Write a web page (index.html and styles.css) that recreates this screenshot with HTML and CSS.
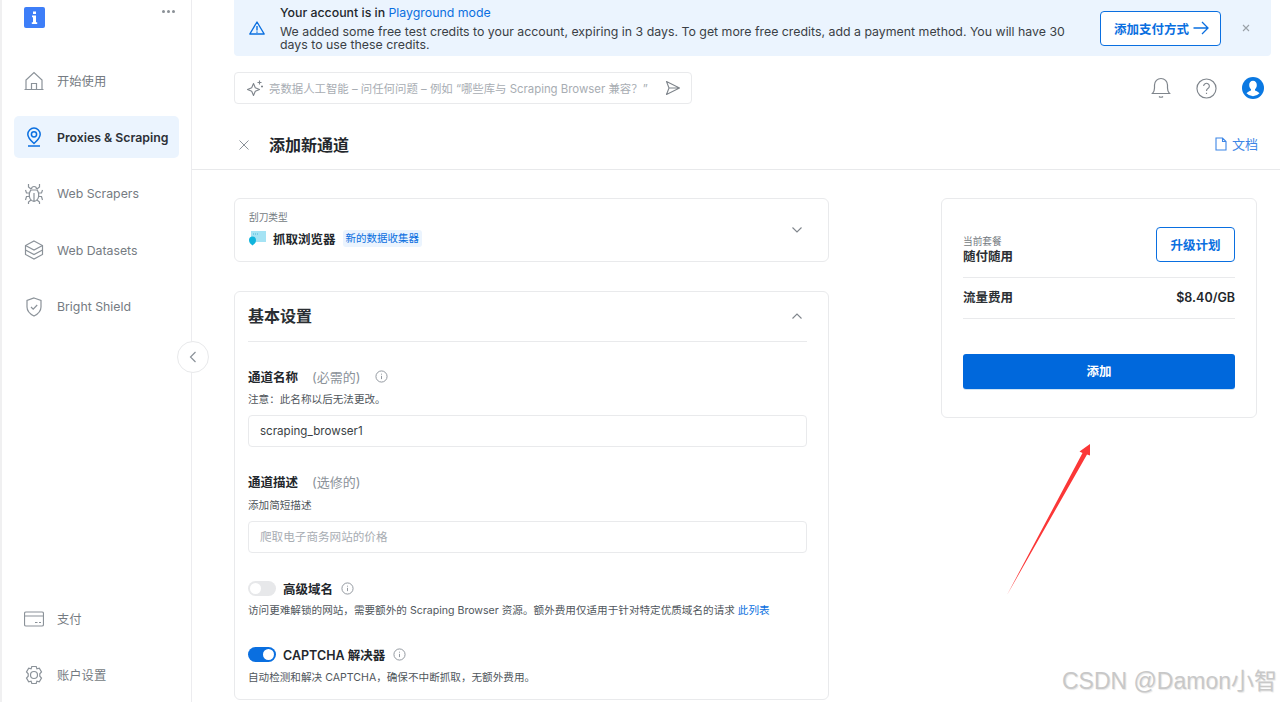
FILE: index.html
```html
<!DOCTYPE html>
<html lang="zh">
<head>
<meta charset="utf-8">
<title>添加新通道</title>
<link rel="stylesheet" href="styles.css">
</head>
<body>
<div class="app">
  <aside class="sidebar">
    <div class="side-top">
      <div class="logo"><svg viewBox="0 0 21 21" width="21" height="21"><rect width="21" height="21" rx="2" fill="#3d7ef8"/><path d="M9 4.500h3v2.600H9zM8 8.500h4v6.700h1.200V17H7.800v-1.800H9v-4.900H8z" fill="#fff"/></svg></div>
      <span class="dots"><i></i><i></i><i></i></span>
    </div>
    <nav class="nav">
      <a class="nav-item"><svg class="ico" viewBox="0 0 20 20"><path d="M.5 18.500h19M2 18.500V9L10 1.500 18 9v9.500M7.500 18.500v-6h5v6" /></svg>开始使用</a>
      <a class="nav-item active"><svg class="ico" viewBox="0 0 20 20"><path d="M10 16.500C6.500 13.500 3.800 10.500 3.800 7.300a6.200 6.200 0 0 1 12.400 0c0 3.200-2.700 6.200-6.200 9.200z"/><circle cx="10" cy="7.300" r="2.600"/><path d="M4 19h12"/></svg>Proxies &amp; Scraping</a>
      <a class="nav-item"><svg class="ico" viewBox="0 0 20 20"><path d="M7.500 5a2.500 2.500 0 0 1 5 0M7 6h6c1.500 1.500 2 4 1.500 7-.5 2.500-2.500 4-4.500 4.500-2-.5-4-2-4.500-4.500-.5-3 0-5.500 1.500-7zM7 5 4.500 3V0M13 5l2.500-2V0M5.500 9h-3l-1-3M14.500 9h3l1-3M5.500 12.500h-3l-1 3.500M14.500 12.500h3l1 3.500M7 16l-2.500 2v2M13 16l2.500 2v2M10 9v8"/></svg>Web Scrapers</a>
      <a class="nav-item"><svg class="ico" viewBox="0 0 20 20"><path d="M10 1 18.500 5.500v9L10 19l-8.500-4.500v-9zM1.500 5.500 10 10l8.500-4.500M1.500 10 10 14.500 18.500 10"/></svg>Web Datasets</a>
      <a class="nav-item"><svg class="ico" viewBox="0 0 20 20"><path d="M10 1 17 3.500v6.500c0 4-3 7-7 9-4-2-7-5-7-9V3.500zM7 10l2.200 2.200L13.200 8"/></svg>Bright Shield</a>
    </nav>
    <nav class="nav nav-bottom">
      <a class="nav-item"><svg class="ico" viewBox="0 0 20 20"><rect x=".5" y="3" width="19" height="14" rx="1.500"/><path d="M.5 7h19M11 13.500h2.500M15 13.500h2"/></svg>支付</a>
      <a class="nav-item"><svg class="ico" viewBox="0 0 20 20"><circle cx="10" cy="10" r="3.500"/><path d="M7.800 1.500h4.400l.7 2.300 2.400-.6 2.200 3.800-1.700 1.800v2.400l1.700 1.800-2.200 3.800-2.400-.6-.7 2.300H7.800l-.7-2.300-2.400.6-2.200-3.800 1.700-1.800V8.800L2.500 7l2.200-3.800 2.400.6z"/></svg>账户设置</a>
    </nav>
  </aside>
  <button class="collapse" aria-label="收起"><svg viewBox="0 0 10 14" width="10" height="14"><path d="M7.500 2 2.500 7l5 5"/></svg></button>

  <main class="main">
    <div class="banner">
      <svg class="warn" viewBox="0 0 16 14" width="16" height="14"><path d="M8 1 15.200 13H.8zM8 5v4.500M8 10.500v1.300"/></svg>
      <div class="banner-text">
        <div class="banner-title">Your account is in <a class="link">Playground mode</a></div>
        <p>We added some free test credits to your account, expiring in 3 days. To get more free credits, add a payment method. You will have 30 days to use these credits.</p>
      </div>
      <button class="btn-outline btn-pay">添加支付方式<svg viewBox="0 0 16 14" width="16" height="14"><path d="M.5 7h14.500M9 1l6 6-6 6"/></svg></button>
      <svg class="banner-x" viewBox="0 0 8 8" width="8" height="8"><path d="M1 1l6 6M7 1 1 7"/></svg>
    </div>

    <div class="toolbar">
      <div class="ask">
        <svg class="spark" viewBox="0 0 18 18" width="18" height="18"><path d="M7.500 4.500 9.300 8.700 13.500 10.500 9.300 12.300 7.500 16.500 5.700 12.300 1.500 10.500 5.700 8.700zM13.500 1.500v4M11.500 3.500h4M16 6.500v2M15 7.500h2"/></svg>
        <span class="ask-text">亮数据人工智能 – 问任何问题 – 例如 “哪些库与 Scraping Browser 兼容？”</span>
        <svg class="send" viewBox="0 0 16 16" width="16" height="16"><path d="M1.500 1.500 14.500 8 1.500 14.500 4 8zM4 8h10.500"/></svg>
      </div>
      <div class="tools">
        <svg class="tool" viewBox="0 0 20 22" width="20" height="22"><path d="M1.500 16.500c1.500-1.500 2-3 2-5.500V8a6.500 6.500 0 0 1 13 0v3c0 2.500.5 4 2 5.500zM8 19.500c1 1 3 1 4 0"/></svg>
        <svg class="tool" viewBox="0 0 22 22" width="21" height="21"><circle cx="11" cy="11" r="10"/><path d="M8 8.500a3 3 0 1 1 4.500 2.600c-1 .6-1.500 1.200-1.500 2.400M11 15.500v1.300"/></svg>
        <svg class="avatar" viewBox="0 0 22 22" width="22" height="22"><circle cx="11" cy="11" r="11" fill="#0a78e2"/><path d="M11 3.800c2.300 0 3.800 1.800 3.800 4.200 0 2-.8 3.400-1.800 4.300v1.200c1.800.6 3.600 1.500 4.500 2.800A8.800 8.800 0 0 1 11 19.200a8.800 8.800 0 0 1-6.500-2.900c.9-1.300 2.700-2.200 4.500-2.800v-1.200C8 11.400 7.200 10 7.200 8c0-2.400 1.500-4.200 3.800-4.200z" fill="#fff"/></svg>
      </div>
    </div>

    <header class="page-head">
      <div class="head-left">
        <svg class="close" viewBox="0 0 10 10" width="10" height="10"><path d="M.5.500l9 9M9.500.500l-9 9"/></svg>
        <h1>添加新通道</h1>
      </div>
      <a class="docs"><svg viewBox="0 0 12 14" width="12" height="14"><path d="M1 1h6.500L11 4.500V13H1zM7.500 1v3.500H11"/></svg>文档</a>
    </header>

    <div class="content">
      <div class="col-form">
        <section class="card type-card">
          <div>
            <div class="type-label">刮刀类型</div>
            <div class="type-row">
              <svg viewBox="0 0 17 16" width="17" height="16"><rect x="2" y="1" width="15" height="11" fill="#a5e3f4"/><path d="M4 4h1M6 4h1M8 4h1" stroke="#4fb8d8" stroke-width="1"/><path d="M3.500 15.500C1.500 14 0 12.500 0 10a3.500 3.500 0 0 1 7 0c0 2.500-1.500 4-3.500 5.500z" fill="#10b4dc"/></svg>
              <strong>抓取浏览器</strong>
              <span class="tag">新的数据收集器</span>
            </div>
          </div>
          <svg class="chev" viewBox="0 0 10 6" width="10" height="6"><path d="M.5.500 5 5 9.500.500"/></svg>
        </section>

        <section class="card settings">
          <div class="settings-head">
            <h2>基本设置</h2>
            <svg class="chev" viewBox="0 0 10 6" width="10" height="6"><path d="M.5 5.500 5 1l4.500 4.500"/></svg>
          </div>

          <div class="field field-first">
            <div class="field-label"><strong>通道名称</strong><span class="hint">(必需的)</span><svg class="info" viewBox="0 0 14 14" width="13" height="13"><circle cx="7" cy="7" r="6"/><path d="M7 6.300v3.500M7 4v1"/></svg></div>
            <div class="field-note">注意：此名称以后无法更改。</div>
            <div class="input">scraping_browser1</div>
          </div>

          <div class="field field-second">
            <div class="field-label"><strong>通道描述</strong><span class="hint">(选修的)</span></div>
            <div class="field-note">添加简短描述</div>
            <div class="input placeholder">爬取电子商务网站的价格</div>
          </div>

          <div class="toggle-block toggle-one">
            <div class="toggle-row"><span class="switch"><i></i></span><strong>高级域名</strong><svg class="info" viewBox="0 0 14 14" width="13" height="13"><circle cx="7" cy="7" r="6"/><path d="M7 6.300v3.500M7 4v1"/></svg></div>
            <div class="field-note">访问更难解锁的网站，需要额外的 Scraping Browser 资源。额外费用仅适用于针对特定优质域名的请求 <a class="link">此列表</a></div>
          </div>

          <div class="toggle-block toggle-two">
            <div class="toggle-row"><span class="switch on"><i></i></span><strong>CAPTCHA 解决器</strong><svg class="info" viewBox="0 0 14 14" width="13" height="13"><circle cx="7" cy="7" r="6"/><path d="M7 6.300v3.500M7 4v1"/></svg></div>
            <div class="field-note">自动检测和解决 CAPTCHA，确保不中断抓取，无额外费用。</div>
          </div>
        </section>
      </div>

      <aside class="card plan">
        <div class="plan-row plan-top">
          <div class="plan-current">
            <div class="plan-label">当前套餐</div>
            <div class="plan-strong">随付随用</div>
          </div>
          <button class="btn-outline btn-up">升级计划</button>
        </div>
        <div class="plan-row plan-price">
          <span class="plan-strong">流量费用</span>
          <span class="price">$8.40/GB</span>
        </div>
        <button class="btn-add">添加</button>
      </aside>
    </div>
  </main>

  <svg class="arrow" viewBox="-2 0 92 156" width="92" height="156"><path d="M-1 154 74.500 12 71.500 10.500 82 3 82 14.500 79 13.500z" fill="#fb3737"/></svg>
  <div class="watermark">CSDN @Damon小智</div>
</div>
</body>
</html>
```

FILE: styles.css
```css
* { box-sizing: border-box; }
html, body { margin: 0; height: 702px; overflow: hidden; background: #fff; }
body { font-family: Inter, "Noto Sans CJK SC", sans-serif; font-size: 12px; color: #2b2f33; }
button { font-family: inherit; cursor: pointer; }
h1, h2, p { margin: 0; }
svg { display: block; flex: none; }
.app { position: relative; display: flex; height: 702px; overflow: hidden; }

.sidebar { width: 192px; flex: none; display: flex; flex-direction: column; border-left: 2px solid #f0f0f1; border-right: 1px solid #ececef; padding: 0 12px; height: 702px; }
.side-top { display: flex; justify-content: space-between; align-items: flex-start; padding: 7px 4px 0 10px; height: 60px; }
.dots { display: flex; gap: 2px; margin-top: 3px; }
.dots i { width: 3px; height: 3px; border-radius: 50%; background: #8a9096; }
.nav { display: flex; flex-direction: column; gap: 14.4px; }
.nav-item { display: flex; align-items: center; gap: 13px; height: 42px; padding-left: 10px; border-radius: 5px; font-size: 12.3px; color: #757b82; }
.nav-item.active { background: #ebf4fe; color: #2c3036; font-weight: 600; }
.nav-item .ico { width: 20px; height: 20px; fill: none; stroke: #8b9299; stroke-width: 1.2; }
.nav-item.active .ico { stroke: #0a6fe0; stroke-width: 1.5; }
.nav-bottom { margin-top: auto; padding-bottom: 6px; }

.collapse { position: absolute; left: 177px; top: 341px; width: 32px; height: 32px; border-radius: 50%; background: #fff; border: 1px solid #e8e9eb; display: flex; align-items: center; justify-content: center; padding: 0; }
.collapse path { fill: none; stroke: #8b9299; stroke-width: 1.2; }

.main { flex: 1; min-width: 0; display: flex; flex-direction: column; }
.banner { display: flex; align-items: center; height: 56px; margin: 0 9px 0 42px; background: #ebf4fe; border-radius: 0 0 4px 4px; padding: 0 21px 0 15px; }
.warn { margin-right: 15px; fill: none; stroke: #0a6fe0; stroke-width: 1.4; stroke-linejoin: round; }
.banner-text { width: 800px; font-size: 12.35px; color: #3a3f45; line-height: 13px; }
.banner-title { font-weight: 500; color: #23272c; margin-bottom: 6px; }
.banner-title .link { font-weight: 400; }
.link { color: #0a6fe0; }
.btn-outline { background: #fff; border: 1px solid #0a6fe0; border-radius: 4px; color: #0a6fe0; font-weight: 600; font-size: 12.5px; display: flex; align-items: center; justify-content: center; }
.btn-pay { margin-left: 21px; width: 121px; height: 35px; gap: 4px; padding: 0 0 0 2px; }
.btn-pay path { fill: none; stroke: #0a6fe0; stroke-width: 1.3; }
.banner-x { margin-left: 21px; fill: none; }
.banner-x path { stroke: #9aa1a8; stroke-width: 1.1; }

.toolbar { display: flex; align-items: center; justify-content: space-between; margin: 16px 16px 0 42px; height: 32px; }
.ask { width: 458px; height: 32px; border: 1px solid #e9eaec; border-radius: 4px; display: flex; align-items: center; padding: 0 10px 0 11px; }
.spark { margin-right: 5px; fill: none; stroke: #7f858c; stroke-width: 1.1; stroke-linejoin: round; }
.ask-text { flex: 1; font-size: 11.4px; color: #a8adb3; white-space: nowrap; overflow: hidden; }
.send { fill: none; stroke: #7f858c; stroke-width: 1.1; stroke-linejoin: round; }
.tools { display: flex; align-items: center; gap: 25px; }
.tool { fill: none; stroke: #7f858c; stroke-width: 1.2; }

.page-head { display: flex; align-items: center; justify-content: space-between; height: 50px; margin-top: 16px; padding: 0 22px 2px 47px; border-bottom: 1px solid #e8e9eb; flex: none; }
.head-left { display: flex; align-items: center; gap: 20px; }
.close { fill: none; stroke: #8b9299; stroke-width: 1; margin-top: 2px; }
h1 { font-size: 16px; font-weight: 700; color: #23272c; }
.docs { display: flex; align-items: center; gap: 5px; color: #3d86e6; font-size: 13px; }
.docs path { fill: none; stroke: #3d86e6; stroke-width: 1.1; }

.content { display: flex; justify-content: space-between; align-items: flex-start; padding: 28px 23px 0 42px; }
.col-form { width: 595px; display: flex; flex-direction: column; gap: 29px; }
.card { border: 1px solid #e9eaec; border-radius: 6px; background: #fff; }
.type-card { height: 64px; display: flex; justify-content: space-between; align-items: center; padding: 0 26px 0 14px; }
.type-label { font-size: 9.7px; line-height: 12px; color: #757b82; margin-top: -1px; }
.type-row { display: flex; align-items: center; margin-top: 5px; height: 18px; }
.type-row strong { font-size: 12.5px; font-weight: 600; color: #23272c; margin-left: 7px; }
.tag { font-size: 10.5px; color: #0a6fe0; background: #ebf4fe; border-radius: 3px; padding: 0 3px; height: 17px; line-height: 17px; margin-left: 7px; }
.chev { fill: none; stroke: #7f858c; stroke-width: 1.1; }

.settings { height: 409px; padding: 0 21px 0 13px; }
.settings-head { display: flex; justify-content: space-between; align-items: center; height: 50px; border-bottom: 1px solid #e9eaec; padding: 0 5px 3px 0; }
.settings-head h2 { font-size: 16px; font-weight: 600; color: #2b2f33; }
.settings-head .chev { margin-top: 2px; }
.field-first { margin-top: 26px; }
.field-second { margin-top: 26px; }
.field-label { display: flex; align-items: center; height: 16px; }
.field-label strong { font-size: 12.5px; font-weight: 600; color: #23272c; }
.hint { font-size: 13px; color: #8b9299; margin-left: 14px; }
.info { fill: none; stroke: #8b9299; stroke-width: 1; margin-left: 14px; }
.field-note { font-size: 10.6px; line-height: 14px; color: #50565c; margin-top: 9px; white-space: nowrap; }
.field-second .field-note { margin-top: 10px; }
.input { height: 32px; border: 1px solid #e9eaec; border-radius: 4px; margin-top: 8px; padding-left: 11px; line-height: 30px; font-size: 11.6px; color: #3a3f45; }
.input.placeholder { color: #a8adb3; }
.toggle-row { display: flex; align-items: center; height: 16px; }
.toggle-row strong { font-size: 12.5px; font-weight: 600; color: #23272c; margin-left: 7px; }
.toggle-row .info { margin-left: 8px; }
.toggle-one { margin-top: 27px; }
.toggle-two { margin-top: 28px; }
.toggle-block .field-note { margin-top: 8px; }
.toggle-two .field-note { margin-top: 9px; }
.switch { width: 28px; height: 15px; border-radius: 8px; background: #e7e8ea; display: flex; align-items: center; padding: 2px; }
.switch i { width: 11px; height: 11px; border-radius: 50%; background: #fff; }
.switch.on { background: #0a6fe0; justify-content: flex-end; }

.plan { width: 316px; height: 220px; padding: 0 21px; }
.plan-row { display: flex; justify-content: space-between; align-items: center; }
.plan-top { height: 79px; padding-top: 13px; border-bottom: 1px solid #e9eaec; }
.plan-current { margin-top: 10px; }
.plan-label { font-size: 9.7px; line-height: 13px; color: #757b82; }
.plan-strong { font-size: 12.5px; font-weight: 600; line-height: 17px; color: #2b2f33; }
.btn-up { width: 79px; height: 35px; padding: 0; }
.plan-price { height: 41px; padding-bottom: 1px; border-bottom: 1px solid #e9eaec; }
.price { font-size: 12.5px; font-weight: 600; color: #23272c; }
.btn-add { display: block; width: 100%; height: 35px; margin-top: 35px; padding: 0 0 2px; border: 0; border-radius: 3px; background: #0068dc; color: #fff; font-size: 12.5px; font-weight: 600; box-shadow: 0 1px 0 #cfe3f3; }

.arrow { position: absolute; left: 1006px; top: 441px; }
.watermark { position: absolute; right: 3px; top: 662px; font-family: "Liberation Sans", "Noto Sans CJK SC", sans-serif; font-size: 23px; color: #c8c8c8; text-shadow: 1px 1px 1px #e6e6e6; white-space: nowrap; }
```
